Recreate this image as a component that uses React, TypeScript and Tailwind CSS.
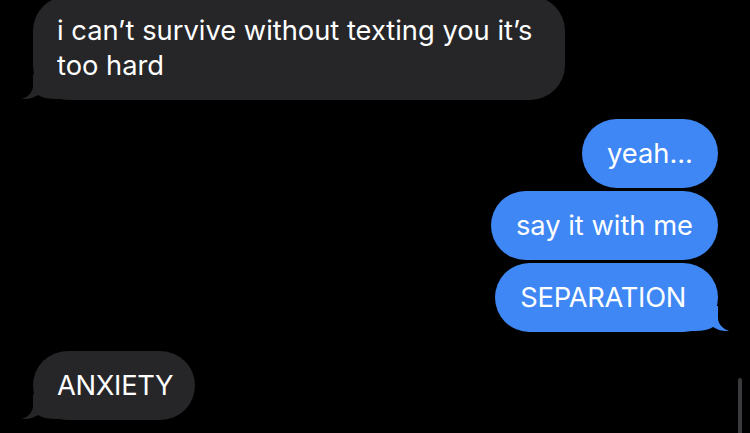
const Tail = ({ side, color }: { side: "left" | "right"; color: string }) => (
  <svg
    width="46"
    height="26"
    viewBox="0 0 46 26"
    className={`absolute bottom-0 ${side === "left" ? "-left-[11px]" : "-right-[11px] -scale-x-100"}`}
  >
    <path
      d="M11 0 L11 12 C11 18 6 23 0 25 C7 25.5 12 23.5 16 21 C20 23.5 26 25 34 25 L46 25 L46 0 Z"
      fill={color}
    />
  </svg>
);

const GRAY = "#262628";
const BLUE = "#3e87f4";

const Bubble = ({
  children,
  me,
  tail,
  className = "",
}: {
  children: React.ReactNode;
  me?: boolean;
  tail?: boolean;
  className?: string;
}) => (
  <div
    className={`relative rounded-[35px] px-[25px] py-[17px] text-[27.3px] leading-[35px] text-white ${
      me ? "bg-[#3e87f4]" : "bg-[#262628]"
    } ${className}`}
  >
    <span className="relative z-10">{children}</span>
    {tail && <Tail side={me ? "right" : "left"} color={me ? BLUE : GRAY} />}
  </div>
);

export default function App() {
  return (
    <div
      className="relative h-[433px] w-[750px] overflow-hidden bg-black"
      style={{ fontFamily: "Inter, 'Noto Sans', sans-serif" }}
    >
      <div className="-mt-[4px] flex flex-col">
        <div className="flex pl-[33px]">
          <Bubble tail className="w-[532px] pl-[24px]">
            i can’t survive without texting you it’s
            <br />
            too hard
          </Bubble>
        </div>

        <div className="mt-[19px] flex flex-col items-end gap-[3px] pr-[32px]">
          <Bubble me>yeah...</Bubble>
          <Bubble me>say it with me</Bubble>
          <Bubble me tail className="pr-[32px] tracking-[-0.3px]">
            SEPARATION
          </Bubble>
        </div>

        <div className="mt-[19px] flex pl-[33px]">
          <Bubble tail className="pl-[24px] pr-[22px] tracking-[-0.3px]">
            ANXIETY
          </Bubble>
        </div>
      </div>

      <div className="absolute right-[8px] top-[378px] h-[70px] w-[4px] rounded-full bg-[#3a3a3c]" />
    </div>
  );
}
